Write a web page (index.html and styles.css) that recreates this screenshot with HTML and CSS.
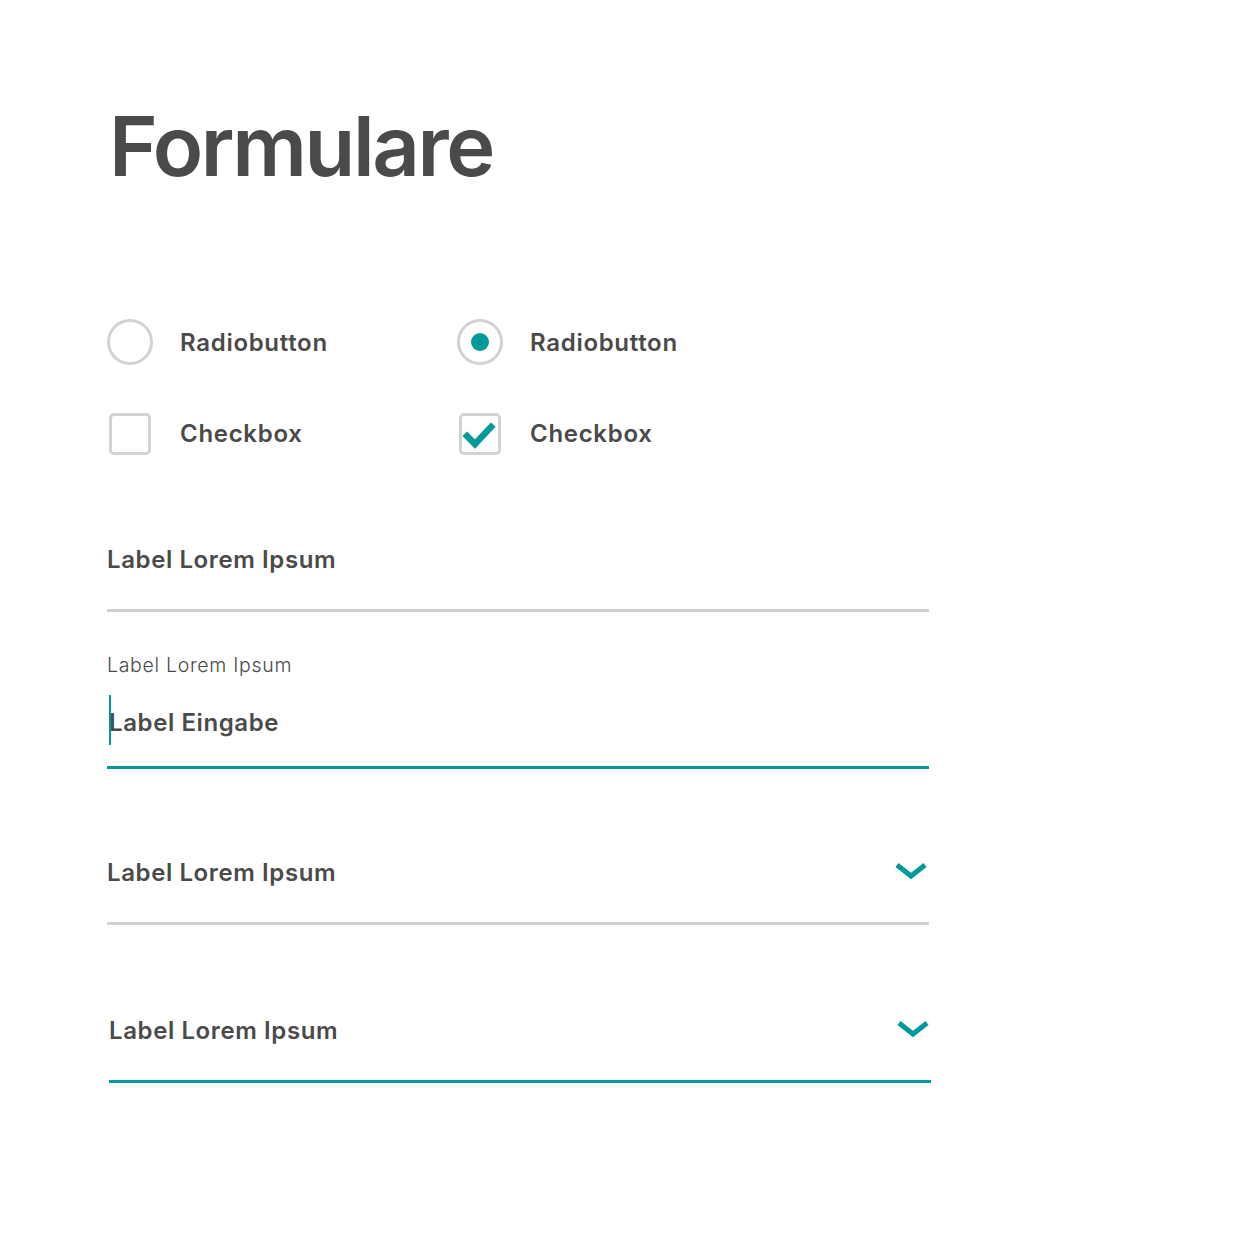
FILE: index.html
```html
<!DOCTYPE html>
<html lang="de">

<head>
    <meta charset="UTF-8">
    <meta name="viewport" content="width=device-width, initial-scale=1.0">
    <title>Formulare</title>
    <link rel="stylesheet" href="styles.css">
</head>

<body>

    <div class="page">
        <h1 class="title">Formulare</h1>

        <!-- Radios and checkboxes -->
        <div class="choices">
            <label class="choice">
                <span class="radio"></span>
                <span class="choice-text">Radiobutton</span>
            </label>
            <label class="choice">
                <span class="radio checked"></span>
                <span class="choice-text">Radiobutton</span>
            </label>
            <label class="choice">
                <span class="box"></span>
                <span class="choice-text">Checkbox</span>
            </label>
            <label class="choice">
                <span class="box">
                    <svg viewBox="0 0 42 42" width="42" height="42">
                        <path d="M8 23 L16 31 L32 14" fill="none" stroke="#009a9a" stroke-width="6.5" stroke-linecap="square"/>
                    </svg>
                </span>
                <span class="choice-text">Checkbox</span>
            </label>
        </div>

        <!-- Text field, empty -->
        <div class="field">
            <div class="field-value placeholder">Label Lorem Ipsum</div>
        </div>

        <!-- Text field, focused -->
        <div class="field active filled">
            <div class="field-label">Label Lorem Ipsum</div>
            <div class="field-value"><span class="cursor"></span>Label Eingabe</div>
        </div>

        <!-- Selects -->
        <div class="field select">
            <div class="field-value placeholder">Label Lorem Ipsum</div>
            <svg class="chevron" viewBox="0 0 32 18" width="32" height="18">
                <path d="M2 3 L16 14 L30 3" fill="none" stroke="#009a9a" stroke-width="5"/>
            </svg>
        </div>

        <div class="field select active shifted">
            <div class="field-value placeholder">Label Lorem Ipsum</div>
            <svg class="chevron" viewBox="0 0 32 18" width="32" height="18">
                <path d="M2 3 L16 14 L30 3" fill="none" stroke="#009a9a" stroke-width="5"/>
            </svg>
        </div>
    </div>

</body>

</html>
```

FILE: styles.css
```css
html, body {
    margin: 0;
    padding: 0;
    background: #fff;
}

body {
    font-family: "Inter", "Open Sans", sans-serif;
    color: #4a4a4a;
}

.page {
    width: 822px;
    padding: 96px 0 0 107px;
}

.title {
    margin: 0 0 0 2px;
    font-size: 83px;
    font-weight: 600;
    line-height: 100px;
    letter-spacing: -2.4px;
    color: #4a4a4a;
}

/* Radios and checkboxes */
.choices {
    display: grid;
    grid-template-columns: 350px 350px;
    row-gap: 46px;
    margin-top: 123px;
}

.choice {
    display: flex;
    align-items: center;
    gap: 27px;
    height: 46px;
}

.choice-text {
    font-size: 24px;
    font-weight: 600;
    letter-spacing: 0.7px;
}

.radio {
    width: 40px;
    height: 40px;
    border: 3px solid #d2d2d2;
    border-radius: 50%;
    display: flex;
    align-items: center;
    justify-content: center;
}

.radio.checked::after {
    content: "";
    width: 18px;
    height: 18px;
    border-radius: 50%;
    background: #009a9a;
}

.box {
    width: 36px;
    height: 36px;
    margin-left: 2px;
    margin-right: 2px;
    border: 3px solid #d2d2d2;
    border-radius: 5px;
    position: relative;
}

.box svg {
    position: absolute;
    left: -3px;
    top: -3px;
}

.box + .choice-text {
    margin-top: -2px;
}

/* Fields */
.field {
    position: relative;
    border-bottom: 3px solid #d0d0d0;
    margin-top: 88px;
}

.field.active {
    border-bottom-color: #009a9a;
}

.field + .field {
    margin-top: 41px;
}

.field.select {
    margin-top: 89px;
}

.field.select + .field.select {
    margin-top: 91px;
}

.field.shifted {
    margin-left: 2px;
    margin-right: -2px;
}

.field-label {
    font-size: 19.5px;
    font-weight: 300;
    line-height: 24px;
    letter-spacing: 0.7px;
    color: #4a4a4a;
}

.field-value {
    font-size: 24px;
    font-weight: 600;
    line-height: 30px;
    letter-spacing: 0.6px;
    padding-bottom: 34px;
    position: relative;
}

.filled .field-value {
    padding-top: 31px;
    padding-bottom: 28px;
    margin-left: 2px;
}

.cursor {
    position: absolute;
    left: 0;
    top: 18px;
    width: 2px;
    height: 50px;
    background: #009a9a;
}

.chevron {
    position: absolute;
    right: 2px;
    top: 4px;
}
```
